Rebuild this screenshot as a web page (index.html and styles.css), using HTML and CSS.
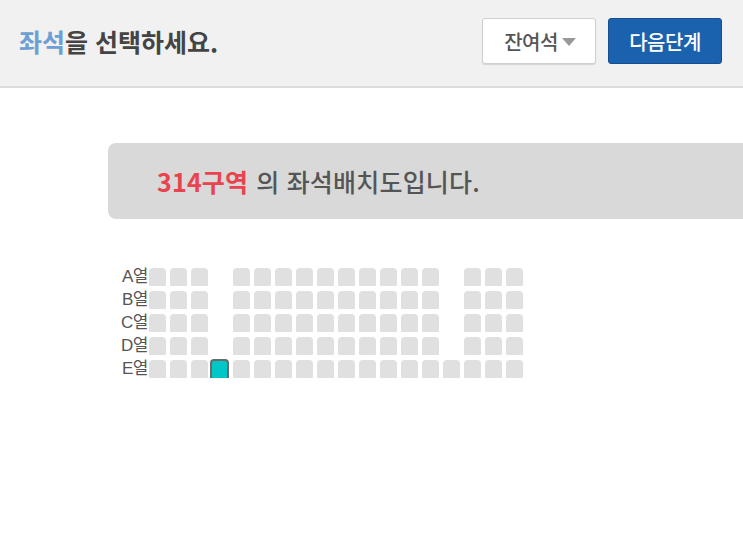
FILE: index.html
```html
<!DOCTYPE html>
<html lang="ko">
<head>
<meta charset="utf-8">
<link rel="stylesheet" href="styles.css">
</head>
<body>
<header class="top">
  <h1 class="title"><span class="hl">좌석</span>을 선택하세요.</h1>
  <div class="actions">
    <button class="btn-select">잔여석<span class="caret"></span></button>
    <button class="btn-next">다음단계</button>
  </div>
</header>
<main class="content">
  <div class="notice"><span class="zone">314구역</span> 의 좌석배치도입니다.</div>
  <div class="seatmap" id="seatmap"></div>
</main>
<script src="app.js"></script>
</body>
</html>
```
FILE: app.js
```js
(function () {
  var map = document.getElementById('seatmap');
  var rows = ['A', 'B', 'C', 'D', 'E'];
  rows.forEach(function (r) {
    var label = document.createElement('div');
    label.className = 'row-label';
    label.textContent = r + '열';
    map.appendChild(label);
    for (var c = 1; c <= 18; c++) {
      var s = document.createElement('div');
      if (r !== 'E' && (c === 4 || c === 15)) {
        s.className = 'seat empty';
      } else if (r === 'E' && c === 4) {
        s.className = 'seat selected';
      } else {
        s.className = 'seat';
      }
      map.appendChild(s);
    }
  });
})();
```
FILE: styles.css
```css
html, body {
  margin: 0;
  padding: 0;
  background: #fff;
  font-family: "Noto Sans CJK KR", "Noto Sans", sans-serif;
  overflow: hidden;
}

.top {
  height: 86px;
  background: #f1f1f1;
  border-bottom: 2px solid #dcdcdc;
  display: flex;
  justify-content: space-between;
  align-items: flex-start;
  padding: 0 21px 0 19px;
  box-sizing: content-box;
}

.title {
  margin: 23px 0 0;
  font-size: 25px;
  font-weight: 700;
  color: #444;
  letter-spacing: 0;
  line-height: 36px;
}

.title .hl {
  color: #6c9fd3;
}

.actions {
  display: flex;
  gap: 12px;
  margin-top: 18px;
}

.btn-select {
  width: 114px;
  height: 46px;
  background: #fff;
  border: 1px solid #cfcfcf;
  border-radius: 3px;
  box-shadow: 0 1px 1px rgba(0,0,0,0.12);
  font-family: inherit;
  font-size: 20px;
  font-weight: 500;
  color: #555;
  display: flex;
  align-items: center;
  justify-content: center;
  gap: 4px;
  padding: 0 0 0 2px;
  letter-spacing: -0.5px;
}

.caret {
  width: 0;
  height: 0;
  border-left: 7px solid transparent;
  border-right: 7px solid transparent;
  border-top: 8px solid #999;
  margin-top: 2px;
}

.btn-next {
  width: 114px;
  height: 46px;
  background: #1b62ae;
  border: 1px solid #164f8f;
  border-radius: 3px;
  font-family: inherit;
  font-size: 20px;
  font-weight: 500;
  color: #fff;
  padding: 0;
  letter-spacing: -0.5px;
}

.content {
  padding: 55px 0 0 108px;
}

.notice {
  height: 76px;
  margin-right: -20px;
  background: #d9d9d9;
  border-radius: 8px 0 0 8px;
  display: flex;
  align-items: center;
  padding-left: 49px;
  font-size: 25px;
  font-weight: 500;
  color: #555;
  letter-spacing: 0.2px;
}

.notice .zone {
  color: #e8434f;
  font-weight: 700;
  margin-right: 8px;
}

.seatmap {
  margin: 49px 0 0 0;
  display: grid;
  grid-template-columns: 37px repeat(18, 17px);
  column-gap: 4px;
  row-gap: 5px;
  grid-auto-rows: 18px;
}

.row-label {
  font-family: "Liberation Sans", "Noto Sans CJK KR", sans-serif;
  font-size: 17px;
  color: #555;
  text-align: right;
  line-height: 18px;
  margin-right: -3px;
  margin-left: -10px;
  letter-spacing: -0.5px;
  white-space: nowrap;
}

.seat {
  background: #e0e0e0;
  border-radius: 4px 4px 1px 1px;
}

.seat.empty {
  background: transparent;
}

.seat.selected {
  background: #00c7c7;
  border: 2px solid #6a6a6a;
  border-radius: 4px 4px 2px 2px;
  margin: -1px 0 -3px -2px;
}
```
